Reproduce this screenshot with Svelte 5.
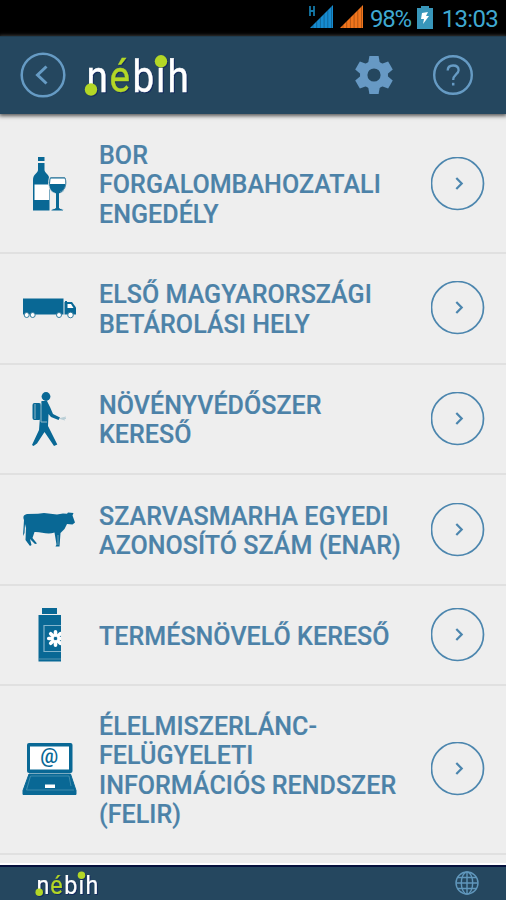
<script lang="ts">
	type Item = { icon: string; lines: string[] };

	const items: Item[] = [
		{ icon: 'wine', lines: ['BOR', 'FORGALOMBAHOZATALI', 'ENGEDÉLY'] },
		{ icon: 'truck', lines: ['ELSŐ MAGYARORSZÁGI', 'BETÁROLÁSI HELY'] },
		{ icon: 'walker', lines: ['NÖVÉNYVÉDŐSZER', 'KERESŐ'] },
		{ icon: 'cow', lines: ['SZARVASMARHA EGYEDI', 'AZONOSÍTÓ SZÁM (ENAR)'] },
		{ icon: 'bottle', lines: ['TERMÉSNÖVELŐ KERESŐ'] },
		{ icon: 'laptop', lines: ['ÉLELMISZERLÁNC-', 'FELÜGYELETI', 'INFORMÁCIÓS RENDSZER', '(FELIR)'] }
	];

	const bars = [0, 1, 2, 3, 4, 5];
	const teeth = [0, 60, 120, 180, 240, 300];
	const petals = [0, 45, 90, 135];
</script>

{#snippet logo(cls: string)}
	<svg class={cls} viewBox="0 0 106 44" role="img" aria-label="nébih">
		<text class="logo-text" transform="scale(0.88 1)" y="38.8" x="2.9 28.9 55.2 81.9 94.9">n<tspan class="lime">é</tspan>bih</text>
		<circle cx="7" cy="36.5" r="6.2" fill="#b3d726" />
		<circle cx="77" cy="8.3" r="6.2" fill="#b3d726" />
	</svg>
{/snippet}

<div class="screen">
	<div class="status">
		<svg width="56" height="24" viewBox="0 0 56 24">
			<path d="M2 1V11M6 1V11M2 6H6" stroke="#1479a8" stroke-width="1.8" fill="none" />
			<path d="M2 23L25 0V23Z" fill="#168bd0" />
			<path d="M32 23L55 0V23Z" fill="#f1751c" />
			{#each bars as b}
				<path d="M{5 + b * 3.7} 23V{20 - b * 3.7}M{35 + b * 3.7} 23V{20 - b * 3.7}" stroke="#000" stroke-opacity="0.25" />
			{/each}
		</svg>
		<span class="percent">98%</span>
		<svg class="battery" width="16" height="23" viewBox="0 0 16 23">
			<path d="M4 0H12V2H16V23H0V2H4Z" fill="#3896ba" />
			<path d="M5 7L11 6L9 10H12L6 18L7 13H4Z" fill="#fff" />
		</svg>
		<span class="clock">13:03</span>
	</div>

	<header>
		<button class="back" aria-label="Vissza">
			<svg width="46" height="46" viewBox="0 0 46 46" fill="none" stroke="#669bc4">
				<circle cx="23" cy="23" r="21.3" stroke-width="2.5" />
				<path d="M26.5 14.5L17.5 23L26.5 31.5" stroke-width="3" />
			</svg>
		</button>
		{@render logo('logo')}
		<button class="settings" aria-label="Beállítások">
			<svg width="38" height="40" viewBox="-19 -20 38 40">
				<g fill="#6799c4">
					{#each teeth as angle}
						<path d="M-6 -11L-4.6 -19H4.6L6 -11Z" transform="rotate({angle})" />
					{/each}
					<path fill-rule="evenodd" d="M0 -14A14 14 0 1 1 0 14A14 14 0 1 1 0 -14ZM0 -6.6A6.6 6.6 0 1 0 0 6.6A6.6 6.6 0 1 0 0 -6.6Z" />
				</g>
			</svg>
		</button>
		<button class="help" aria-label="Súgó">
			<svg width="40" height="40" viewBox="0 0 40 40" fill="none" stroke="#669bc4">
				<circle cx="20" cy="20" r="18.8" stroke-width="2.4" />
				<path d="M14.7 15.5C14.7 12.2 17 10.5 20.1 10.5C23.4 10.5 25.6 12.4 25.6 15.3C25.6 19 20.2 19.7 20.2 25" stroke-width="2.3" />
				<path d="M20.2 27.8V30.5" stroke-width="2.5" />
			</svg>
		</button>
	</header>

	<ul class="list">
		{#each items as item}
			<li>
				<svg class="icon" width="60" height="60" viewBox="0 0 60 60" fill="#096895">
					{#if item.icon === 'wine'}
						<path d="M19 3H25.5V7H19ZM19 9H25.5V16C25.5 19 30.5 20 30.5 26V56.5H14V26C14 20 19 19 19 16Z" />
						<path d="M15.5 30.5H30V46H15.5Z" fill="#fff" />
						<path d="M30.5 23H46.5C48.5 31 46 38.5 40.5 39.5V54L44.5 55.5V57H32V55.5L36.5 54V39.5C30 38 28.5 31 30.5 23Z" stroke="#eee" />
						<path d="M31.5 24.5H45.8L46.5 30H31Z" fill="#fff" />
						<path d="M32 23.5H45.8M46.2 24C48 31 46 36 41 38" stroke="#518ba9" fill="none" />
					{:else if item.icon === 'truck'}
						<path d="M4 20.5H44.5V36.5H4Z" />
						<path d="M45.5 24H53L57 29.5V36.5H45.5Z" />
						<path d="M48.5 26H52L54.5 30H48.5Z" fill="#fff" />
						<path d="M47 23V26" stroke="#096895" stroke-width="2" />
						<g fill="#fff" stroke="#337c9e">
							<circle cx="7.7" cy="37" r="2.5" />
							<circle cx="13.7" cy="37" r="2.5" />
							<circle cx="40" cy="37" r="2.5" />
							<circle cx="51.5" cy="37" r="2.8" />
						</g>
					{:else if item.icon === 'walker'}
						<circle cx="27" cy="7.5" r="4.4" />
						<path d="M22.5 12H28L31 18L34 25L41 28.5L39.5 31L32 28L29.5 25L29 37L38.3 55.5L35 57L25.5 43L18 54.5L14.5 57L13 56L20 41L21 28Z" />
						<rect x="13.5" y="14" width="8.5" height="17" rx="2" />
						<path d="M16 15V30M22 14V33H28" stroke="#91b9c9" fill="none" />
						<path d="M41 29.5L47 28M41 29.5H47M41 29.5L46 31" stroke="#b9ced6" fill="none" />
					{:else if item.icon === 'cow'}
						<path d="M8 14L19 13.8L25 13L38 14.5L44 13.5L48 13.8L49 12.5L54.5 13L53.5 15.5L56 22.5L53.5 24.5L48 24L45.5 29L41.5 33L40.5 46.5H36.5L37.5 44.5L35.5 32.5C28 35 22 31.5 15.5 32L13.5 38L18 43.5L16 44L11 39L12.5 45L11 46L6.5 40L7 28L6 24L5.5 33L4 36L5 20C4 17 4 15 8 14Z" />
						<path d="M39 35V45" stroke="#6ca3ba" />
					{:else if item.icon === 'bottle'}
						<path d="M23 3H38V9H23ZM19.5 10H42V56.5H19.5Z" />
						<path d="M42 20.5H25V46.5H42" fill="none" stroke="#83b4cc" stroke-width="1.2" />
						<path d="M20 54H42" stroke="#5794b0" />
						<g transform="translate(36.5 33.5)" stroke="#fff" stroke-width="3.6" stroke-linecap="round">
							{#each petals as angle}
								<path d="M0 -6.8V-3.4M0 3.4V6.8" transform="rotate({angle})" />
							{/each}
						</g>
						<path d="M42 25H47V43H42Z" fill="#eee" />
					{:else}
						<rect x="8" y="4" width="45.5" height="30" rx="2" />
						<path d="M11 7.5H50V30.5H11Z" fill="#fff" />
						<path d="M10 35H51.5L57 51.5V55.5H4V51.5Z" stroke="#096895" stroke-linejoin="round" />
						<path d="M11.5 37H50L52 47M11.5 37L7.5 51H55" fill="none" stroke="#4d94b2" stroke-width=".8" />
						<rect x="26" y="45.5" width="10" height="3.5" fill="#fff" />
						<text class="at" x="30.2" y="24" text-anchor="middle">@</text>
					{/if}
				</svg>
				<div class="label">
					{#each item.lines as line}
						<span>{line}</span>
					{/each}
				</div>
				<svg class="go" width="54" height="54" viewBox="0 0 54 54" fill="none" stroke="#4c86ae">
					<circle cx="26.5" cy="26.5" r="26" stroke-width="1.7" />
					<path d="M25.3 21L30.7 26.5L25.3 32" stroke-width="2.2" />
				</svg>
			</li>
		{/each}
	</ul>

	<footer>
		{@render logo('logo-small')}
		<svg class="globe" width="24" height="24" viewBox="0 0 24 24" fill="none" stroke="#6097bc" stroke-width="1.4">
			<circle cx="12" cy="12" r="11" />
			<ellipse cx="12" cy="12" rx="5.7" ry="11" />
			<path d="M12 1V23M1 12H23M3 6.5H21M3 17.5H21" />
		</svg>
	</footer>
</div>

<style>
	:global(body) {
		margin: 0;
	}

	.screen {
		width: 506px;
		height: 900px;
		display: flex;
		flex-direction: column;
		overflow: hidden;
		background: #eee;
		font-family: Roboto, 'Liberation Sans', sans-serif;
	}

	svg {
		display: block;
		flex: none;
	}

	button {
		padding: 0;
		border: 0;
		background: none;
	}

	.status {
		height: 36px;
		flex: none;
		box-sizing: border-box;
		padding: 0 8px 2px 308px;
		display: flex;
		align-items: center;
		background: #000;
		color: #3fa9d1;
		font-size: 24px;
	}

	.percent {
		width: 47px;
		margin-left: 6px;
		padding-top: 3px;
		letter-spacing: -1.2px;
	}

	.clock {
		margin-left: 9px;
		padding-top: 3px;
		letter-spacing: -0.7px;
		white-space: nowrap;
	}

	header {
		height: 78px;
		flex: none;
		display: flex;
		align-items: center;
		box-sizing: border-box;
		padding: 0 33px 2px 20px;
		background: #25475f;
		border-top: 1px solid #203d50;
		box-shadow: 0 1px 4px 1px #555;
		position: relative;
	}

	.logo {
		width: 106px;
		height: 44px;
		margin-left: 18px;
		overflow: visible;
		filter: drop-shadow(1px 1px 0 #142c5e);
	}

	.logo-text {
		font-size: 44px;
		fill: #fff;
		stroke: #fff;
		stroke-width: 0.4px;
	}

	.lime {
		fill: #b3d726;
		stroke: #b3d726;
	}

	.settings {
		margin-left: auto;
	}

	.help {
		margin-left: 40px;
	}

	.list {
		list-style: none;
		margin: 0;
		padding: 1px 0 0;
		flex: none;
		display: grid;
		grid-template-rows: 139px 110.5px 110.5px 111px 100px 168.5px;
	}

	li {
		display: flex;
		align-items: center;
		box-sizing: border-box;
		padding: 0 21px 0 19px;
		border-bottom: 2px solid #e0e0e0;
	}

	.label {
		flex: 1;
		padding: 3px 0 0 20px;
		display: flex;
		flex-direction: column;
		color: #4c82a8;
		font-size: 25px;
		font-weight: 500;
		line-height: 29.5px;
		letter-spacing: 0.06px;
		white-space: nowrap;
		-webkit-text-stroke: 0.2px #4c82a8;
	}

	.at {
		font-size: 20px;
		font-weight: 500;
	}

	footer {
		margin-top: auto;
		height: 35px;
		flex: none;
		box-sizing: border-box;
		display: flex;
		align-items: center;
		justify-content: space-between;
		padding: 0 27px 1px 35px;
		background: #25475f;
		border-top: 2px solid #06113d;
		box-shadow: 0 -2px 0 #fff;
	}

	.logo-small {
		width: 64px;
		height: 27px;
		overflow: visible;
		filter: drop-shadow(1px 1px 0 #142c5e);
	}
</style>
